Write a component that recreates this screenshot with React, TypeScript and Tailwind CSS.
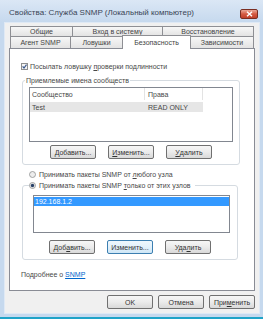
import React from "react";

function Btn({
  children,
  focused = false,
  w = "w-[46px]",
}: {
  children: React.ReactNode;
  focused?: boolean;
  w?: string;
}) {
  return (
    <div
      className={
        (focused
          ? "border-[#3c7fb1] bg-gradient-to-b from-[#eef7fd] via-[#e3f1fb] to-[#cde6f6] "
          : "border-[#707070] bg-gradient-to-b from-[#f6f6f6] via-[#ebebeb] to-[#d9d9d9] ") +
        w +
        " h-[14px] rounded-[2px] border flex items-center justify-center text-[7px] leading-[9px] text-[#333] whitespace-nowrap"
      }
    >
      {children}
    </div>
  );
}

function Radio({ checked = false }: { checked?: boolean }) {
  return (
    <svg width="7" height="7" viewBox="0 0 7 7" className="shrink-0">
      <circle cx="3.5" cy="3.5" r="3" fill="#ededed" stroke="#8e8f8f" strokeWidth="0.8" />
      {checked && <circle cx="3.5" cy="3.5" r="1.7" fill="#263f66" />}
    </svg>
  );
}

function Check() {
  return (
    <svg width="7" height="7" viewBox="0 0 7 7" className="shrink-0">
      <rect x="0.5" y="0.5" width="6" height="6" fill="#f5f5f5" stroke="#8e8f8f" />
      <path d="M1.6 3.4 L3 5 L5.5 1.7" stroke="#3c5a8e" strokeWidth="1.2" fill="none" />
    </svg>
  );
}

const tabBase =
  "border-t border-l border-r border-[#8e8f94] bg-gradient-to-b from-[#f7f7f7] to-[#e3e3e3] flex items-center justify-center text-[7px] leading-[9px] text-[#444] whitespace-nowrap";

export default function App() {
  return (
    <div className="w-[263px] h-[320px] flex flex-col bg-[#c6d9ee] font-['Liberation_Sans',Arial,sans-serif] text-[#474747] overflow-hidden">
      {/* Title bar */}
      <div className="h-[22px] shrink-0 flex items-start bg-gradient-to-b from-[#dbe7f5] to-[#c6d9ee]">
        <div className="pl-[9px] pt-[8px] text-[8px] leading-[10px] text-[#3a4556] whitespace-nowrap">
          Свойства: Служба SNMP (Локальный компьютер)
        </div>
        <div className="ml-auto mr-[5px] mt-[9px] w-[18px] h-[10px] rounded-[2px] border border-[#7a2e22] bg-gradient-to-b from-[#e9a999] via-[#d45a42] to-[#c0402a] flex items-center justify-center">
          <svg width="7" height="6" viewBox="0 0 7 6">
            <path d="M1 0.8 L6 5.2 M6 0.8 L1 5.2" stroke="#fff" strokeWidth="1.4" />
          </svg>
        </div>
      </div>

      {/* Interior */}
      <div className="ml-[4px] mr-[3px] h-[292px] shrink-0 border border-[#dfe9f5] bg-[#f0f0f0] flex flex-col">
        {/* Tabs */}
        <div className="pt-[3px] pl-[5px] flex flex-col">
          <div className="flex h-[10px]">
            <div className={tabBase + " w-[63px]"}>Общие</div>
            <div className={tabBase + " w-[91px] -ml-px"}>Вход в систему</div>
            <div className={tabBase + " w-[92px] -ml-px"}>Восстановление</div>
          </div>
          <div className="flex h-[12px] items-end">
            <div className={tabBase + " w-[61px] h-[12px]"}>Агент SNMP</div>
            <div className={tabBase + " w-[53px] h-[12px] -ml-px"}>Ловушки</div>
            <div className="relative z-10 -ml-px -mb-px w-[69px] h-[14px] border-t border-l border-r border-[#8e8f94] bg-white flex items-center justify-center text-[7px] leading-[9px] text-[#444] whitespace-nowrap pb-[1px]">
              Безопасность
            </div>
            <div className={tabBase + " w-[64px] h-[12px] -ml-px"}>Зависимости</div>
          </div>
        </div>

        {/* Panel */}
        <div className="ml-[4px] w-[246px] h-[243px] border border-[#898c95] bg-white pl-[11px] flex flex-col text-[7px] leading-[9px]">
          <div className="mt-[13px] h-[9px] flex items-center">
            <Check />
            <span className="ml-[2px] whitespace-nowrap">
              Посылать ловушку <span className="underline">п</span>роверки подлинности
            </span>
          </div>

          <fieldset className="mt-[5px] ml-[1px] w-[216px] border border-[#d5dbe1] rounded-[3px] px-[6px] pt-[2px] pb-[5px]">
            <legend className="-ml-[4px] px-[1px] leading-[9px] whitespace-nowrap">
              Приемлемые имена сообществ
            </legend>
            <div className="w-[204px] h-[55px] border border-[#828790] flex flex-col">
              <div className="h-[12px] flex shrink-0">
                <div className="w-[115px] border-r border-[#e3e3e3] pl-[2px] flex items-center">Сообщество</div>
                <div className="w-[58px] border-r border-[#e3e3e3] pl-[3px] flex items-center">Права</div>
              </div>
              <div className="mt-[2px] h-[10px] w-[173px] bg-[#e6e6e6] flex items-center">
                <div className="w-[115px] pl-[2px]">Test</div>
                <div className="pl-[3px]">READ ONLY</div>
              </div>
            </div>
            <div className="mt-[3px] flex justify-center gap-[12px]">
              <Btn>
                <span className="underline">Д</span>обавить...
              </Btn>
              <Btn>
                <span className="underline">И</span>зменить...
              </Btn>
              <Btn>
                <span className="underline">У</span>далить
              </Btn>
            </div>
          </fieldset>

          <div className="mt-[5px] ml-[8px] h-[9px] flex items-center">
            <Radio />
            <span className="ml-[3px] whitespace-nowrap">
              Принимать пакеты SNMP от <span className="underline">л</span>юбого узла
            </span>
          </div>

          <fieldset className="mt-[2px] ml-[1px] w-[216px] border border-[#d5dbe1] rounded-[3px] px-[6px] pt-[5px] pb-[5px]">
            <legend className="h-[9px] flex items-center pr-[4px]">
              <Radio checked />
              <span className="ml-[3px] whitespace-nowrap">
                Принимать пакеты SNMP <span className="underline">т</span>олько от этих узлов
              </span>
            </legend>
            <div className="ml-[4px] w-[197px] h-[38px] border border-[#828790] flex flex-col">
              <div className="mt-[1px] h-[9px] bg-[#3399ff] text-white pl-[1px] flex items-center">192.168.1.2</div>
            </div>
            <div className="mt-[7px] flex justify-center gap-[12px]">
              <Btn>
                Доб<span className="underline">а</span>вить...
              </Btn>
              <Btn focused>Изменить...</Btn>
              <Btn>
                Уда<span className="underline">л</span>ить
              </Btn>
            </div>
          </fieldset>

          <div className="mt-[10px] h-[9px] flex items-center whitespace-nowrap">
            Подробнее о&nbsp;<span className="text-[#0066cc] underline">SNMP</span>
          </div>
        </div>

        {/* Bottom buttons */}
        <div className="mt-[4px] pr-[4px] flex justify-end gap-[5px]">
          <Btn>OK</Btn>
          <Btn>Отмена</Btn>
          <Btn>
            При<span className="underline">м</span>енить
          </Btn>
        </div>
      </div>

      <div className="h-[3px] shrink-0" />
      <div className="h-[2px] shrink-0 bg-[#1fa3c8]" />
      <div className="flex-1 bg-white" />
    </div>
  );
}
